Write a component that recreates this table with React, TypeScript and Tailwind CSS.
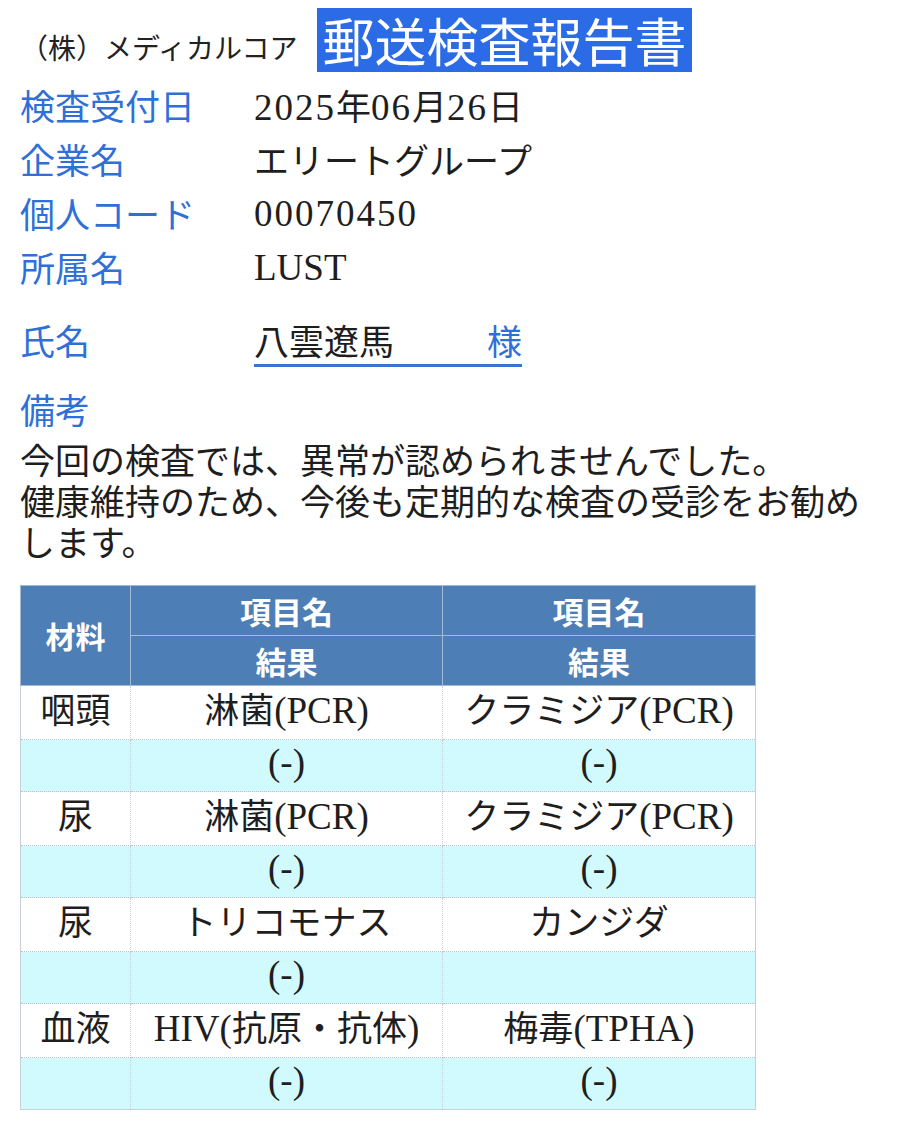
import React from "react";

const SANS = "[font-family:'Noto_Sans_CJK_JP',sans-serif]";
const SERIF = "[font-family:'Liberation_Serif','Noto_Sans_CJK_JP',serif]";

function Mixed({ text }: { text: string }) {
  const parts = text.split(/([0-9]+|[\x20-\x2F\x3A-\x7E]+)/).filter(Boolean);
  return (
    <>
      {parts.map((p, i) => {
        if (/^[0-9]+$/.test(p))
          return (
            <span key={i} className={`${SERIF} text-[37px] tracking-[2px]`}>
              {p}
            </span>
          );
        if (/^[\x20-\x7E]+$/.test(p))
          return (
            <span key={i} className={`${SERIF} text-[37px]`}>
              {p}
            </span>
          );
        return (
          <span key={i} className={`${SANS} text-[35px]`}>
            {p}
          </span>
        );
      })}
    </>
  );
}

const rows: { label: string; value: string }[] = [
  { label: "検査受付日", value: "2025年06月26日" },
  { label: "企業名", value: "エリートグループ" },
  { label: "個人コード", value: "00070450" },
  { label: "所属名", value: "LUST" },
];

const tableData: { mat: string; a: string; b: string; ra: string; rb: string }[] = [
  { mat: "咽頭", a: "淋菌(PCR)", b: "クラミジア(PCR)", ra: "(-)", rb: "(-)" },
  { mat: "尿", a: "淋菌(PCR)", b: "クラミジア(PCR)", ra: "(-)", rb: "(-)" },
  { mat: "尿", a: "トリコモナス", b: "カンジダ", ra: "(-)", rb: "" },
  { mat: "血液", a: "HIV(抗原・抗体)", b: "梅毒(TPHA)", ra: "(-)", rb: "(-)" },
];

export default function App() {
  return (
    <div className="w-[900px] h-[1128px] bg-white text-[#1e1e1e] overflow-hidden">
      {/* Header */}
      <div className="flex items-start pt-[8px] pl-[20px]">
        <div className={`${SANS} text-[28px] leading-[40px] mt-[19px] text-[#222]`}>
          （株）メディカルコア
        </div>
        <div
          className={`${SANS} ml-[20px] bg-[#2b6be6] text-white text-[52px] leading-[64px] h-[64px] px-[5px]`}
        >
          郵送検査報告書
        </div>
      </div>

      {/* Info rows */}
      <div className="pl-[20px] mt-[6px]">
        {rows.map((r) => (
          <div key={r.label} className="flex h-[54px] items-center">
            <div className={`${SANS} w-[234px] text-[35px] leading-[54px] text-[#2f6fd8]`}>
              {r.label}
            </div>
            <div className="leading-[46px] mt-[8px] text-[#1e1e1e]">
              <Mixed text={r.value} />
            </div>
          </div>
        ))}

        <div className="flex mt-[22px]">
          <div className={`${SANS} w-[234px] text-[35px] leading-[48px] text-[#2f6fd8]`}>
            氏名
          </div>
          <div className="w-[268px] flex justify-between border-b-[3px] border-[#3a73d4]">
            <span className={`${SANS} text-[35px] leading-[48px] text-[#1e1e1e]`}>
              八雲遼馬
            </span>
            <span className={`${SANS} text-[35px] leading-[48px] text-[#2f6fd8]`}>様</span>
          </div>
        </div>

        <div className={`${SANS} mt-[22px] text-[35px] leading-[40px] text-[#2f6fd8]`}>
          備考
        </div>
        <div
          className={`${SANS} mt-[9px] pr-[30px] text-[35px] leading-[41px] text-[#1e1e1e]`}
        >
          <div>今回の検査では、異常が認められませんでした。</div>
          <div>健康維持のため、今後も定期的な検査の受診をお勧めします。</div>
        </div>
      </div>

      {/* Table */}
      <div className="pl-[20px] mt-[24px]">
        <table className="border-collapse w-[735px] table-fixed border border-[#c9cfd6]">
          <colgroup>
            <col className="w-[110px]" />
            <col className="w-[312px]" />
            <col className="w-[313px]" />
          </colgroup>
          <thead>
            <tr className="h-[50px] bg-[#4e7eb6]">
              <th
                rowSpan={2}
                className={`${SANS} text-white font-bold text-[30px] border border-[#a3bbd9] text-center align-middle`}
              >
                材料
              </th>
              <th
                className={`${SANS} text-white font-bold text-[31px] leading-[48px] border border-[#a3bbd9] text-center`}
              >
                項目名
              </th>
              <th
                className={`${SANS} text-white font-bold text-[31px] leading-[48px] border border-[#a3bbd9] text-center`}
              >
                項目名
              </th>
            </tr>
            <tr className="h-[50px] bg-[#4e7eb6]">
              <th
                className={`${SANS} text-white font-bold text-[31px] leading-[48px] border border-[#a3bbd9] text-center`}
              >
                結果
              </th>
              <th
                className={`${SANS} text-white font-bold text-[31px] leading-[48px] border border-[#a3bbd9] text-center`}
              >
                結果
              </th>
            </tr>
          </thead>
          <tbody>
            {tableData.map((d, i) => (
              <React.Fragment key={i}>
                <tr className="h-[52px] bg-white">
                  <td className="border-x border-x-[#c9cfd6] border-b border-b-[#b9c2cc] border-dotted text-center leading-[44px]">
                    <Mixed text={d.mat} />
                  </td>
                  <td className="border-x border-x-[#c9cfd6] border-b border-b-[#b9c2cc] border-dotted text-center leading-[44px] whitespace-nowrap">
                    <Mixed text={d.a} />
                  </td>
                  <td className="border-x border-x-[#c9cfd6] border-b border-b-[#b9c2cc] border-dotted text-center leading-[44px] whitespace-nowrap">
                    <Mixed text={d.b} />
                  </td>
                </tr>
                <tr className="h-[52px] bg-[#d0fafd]">
                  <td className="border-x border-x-[#c9cfd6] border-b border-b-[#b9c2cc] border-dotted text-center leading-[44px]"></td>
                  <td className="border-x border-x-[#c9cfd6] border-b border-b-[#b9c2cc] border-dotted text-center leading-[44px]">
                    <Mixed text={d.ra} />
                  </td>
                  <td className="border-x border-x-[#c9cfd6] border-b border-b-[#b9c2cc] border-dotted text-center leading-[44px]">
                    <Mixed text={d.rb} />
                  </td>
                </tr>
              </React.Fragment>
            ))}
          </tbody>
        </table>
      </div>
    </div>
  );
}
